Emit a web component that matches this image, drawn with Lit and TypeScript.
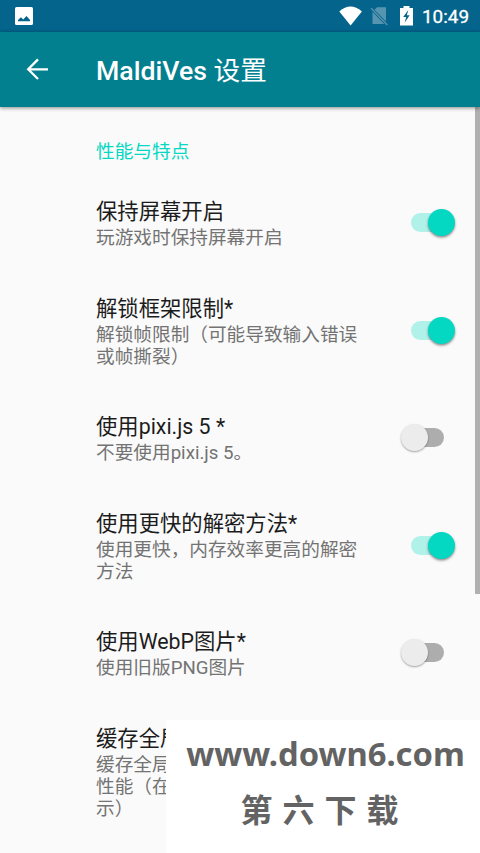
import { LitElement, html, css } from "lit";
import { customElement, property } from "lit/decorators.js";

interface Setting {
  title: string;
  lines: string[];
  on?: boolean;
}

const SETTINGS: Setting[] = [
  { title: "保持屏幕开启", lines: ["玩游戏时保持屏幕开启"], on: true },
  { title: "解锁框架限制*", lines: ["解锁帧限制（可能导致输入错误", "或帧撕裂）"], on: true },
  { title: "使用pixi.js 5 *", lines: ["不要使用pixi.js 5。"], on: false },
  { title: "使用更快的解密方法*", lines: ["使用更快，内存效率更高的解密", "方法"], on: true },
  { title: "使用WebP图片*", lines: ["使用旧版PNG图片"], on: false },
  { title: "缓存全局", lines: ["缓存全局", "性能（在", "示）"] },
];

@customElement("toggle-switch")
class ToggleSwitch extends LitElement {
  @property({ type: Boolean, reflect: true }) on = false;

  static styles = css`
    :host { display: flex; align-items: center; justify-content: flex-start; width: 53.5px; height: 28px; }
    :host([on]) { justify-content: flex-end; }
    .track { display: flex; align-items: center; width: 32.5px; height: 19px; border-radius: 10px; background: #adadad; margin-left: 11px; }
    .thumb { flex: none; width: 27px; height: 27px; border-radius: 50%; background: #ececec; margin-left: -11px;
      box-shadow: 0 1px 2px rgba(0, 0, 0, .35); }
    :host([on]) .track { justify-content: flex-end; background: #b0f1e9; margin: 0 10.5px 0 0; }
    :host([on]) .thumb { background: #04d8c3; margin: 0 -11px 0 0; box-shadow: 0 1.5px 2.5px rgba(0, 0, 0, .45); }
  `;

  render() {
    return html`<div class="track"><div class="thumb"></div></div>`;
  }
}

@customElement("app-root")
class AppRoot extends LitElement {
  static styles = css`
    :host { display: flex; flex-direction: column; position: relative; width: 480px; height: 853px; overflow: hidden;
      background: #fafafa; color: #1c1c1c; font-family: Roboto, "Noto Sans CJK SC", sans-serif; }
    .status { flex: none; height: 32px; display: flex; align-items: center; background: #04648c; color: #fff;
      padding: 0 11px 0 15px; box-sizing: border-box; }
    .status svg { display: block; }
    .spacer { flex: 1; }
    .clock { font-size: 18.9px; line-height: 32px; font-weight: 400; -webkit-text-stroke: .3px #fff; margin-left: 9px; padding-top: 2px; }
    .bar { flex: none; z-index: 1; height: 75px; box-sizing: border-box; display: flex; align-items: center; background: #03808f; color: #fff;
      box-shadow: 0 1px 4px rgba(0, 0, 0, .45); padding-left: 26px; }
    .bar svg { margin-top: -2px; }
    .bar h1 { margin: 2px 0 0 47px; font-size: 26.67px; font-weight: 500; line-height: 36px; white-space: pre; }
    .bar .cjk { font-weight: 400; }
    .content { flex: 1; display: flex; min-height: 0; }
    .list { flex: 1; padding-left: 96px; }
    .section { color: #04d8c3; font-size: 18.67px; line-height: 24px; padding: 33px 0 10.6px; }
    .row { display: flex; align-items: center; padding: 21.7px 21px 21.7px 0; }
    .text { flex: 1; white-space: nowrap; }
    .title { font-size: 21.33px; line-height: 31px; }
    .summary { font-size: 18.67px; line-height: 22.1px; color: #737373; }
    .scroll { width: 5px; height: 487px; background: #b0b0b0; }
    .mark { position: absolute; left: 166px; top: 720px; width: 314px; height: 133px; background: #fff; color: #636363;
      display: flex; flex-direction: column; align-items: center; box-sizing: border-box; padding: 12px 0 0 5px; white-space: nowrap; }
    .url { font-family: "Noto Sans", sans-serif; font-weight: 700; font-size: 32.7px; line-height: 44px; }
    .name { font-family: "Noto Sans CJK SC", sans-serif; font-weight: 700; font-size: 32px; line-height: 44px; margin-top: 10px; margin-left: -2px; letter-spacing: 10px; }
  `;

  private row(s: Setting) {
    return html`<div class="row">
      <div class="text">
        <div class="title">${s.title}</div>
        ${s.lines.map((l) => html`<div class="summary">${l}</div>`)}
      </div>
      ${s.on === undefined ? "" : html`<toggle-switch ?on=${s.on}></toggle-switch>`}
    </div>`;
  }

  render() {
    return html`
      <div class="status">
        <svg width="18" height="18" viewBox="0 0 18 18">
          <rect width="18" height="18" rx="1.6" fill="#fff" />
          <path d="M3 14.3V13L6 10.3L8.2 12.4L11.5 9L15 13V14.3Z" fill="#04648c" />
        </svg>
        <div class="spacer"></div>
        <svg width="75" height="22" viewBox="338 5 75 22">
          <path d="M339.3 11.5Q350.5 1.6 361.9 11.5L350.6 25.4Z" fill="#fff" />
          <path d="M374.5 9.7L377 7.2H386V21.6L374.5 9.7ZM372.5 11.8L384.3 24H372.5Z" fill="#5794b0" />
          <path d="M371.2 8.2L387.3 25" stroke="#5794b0" stroke-width="1.4" />
          <path d="M400 8H403.5V6H409.5V8H413V25.5H400Z" fill="#fff" />
          <path d="M408.3 10L403.2 17H406.2L404.7 22.7L409.6 15.3H406.8Z" fill="#04648c" />
        </svg>
        <div class="clock">10:49</div>
      </div>
      <div class="bar">
        <svg width="23" height="22" viewBox="0 0 23 22">
          <path d="M22 11.3H2.5M12 1.4L2.2 11.3L12 21" fill="none" stroke="#fff" stroke-width="2.3" />
        </svg>
        <h1>MaldiVes <span class="cjk">设置</span></h1>
      </div>
      <div class="content">
        <div class="list">
          <div class="section">性能与特点</div>
          ${SETTINGS.map((s) => this.row(s))}
        </div>
        <div class="scroll"></div>
      </div>
      <div class="mark">
        <div class="url">www.down6.com</div>
        <div class="name">第六下载</div>
      </div>
    `;
  }
}
